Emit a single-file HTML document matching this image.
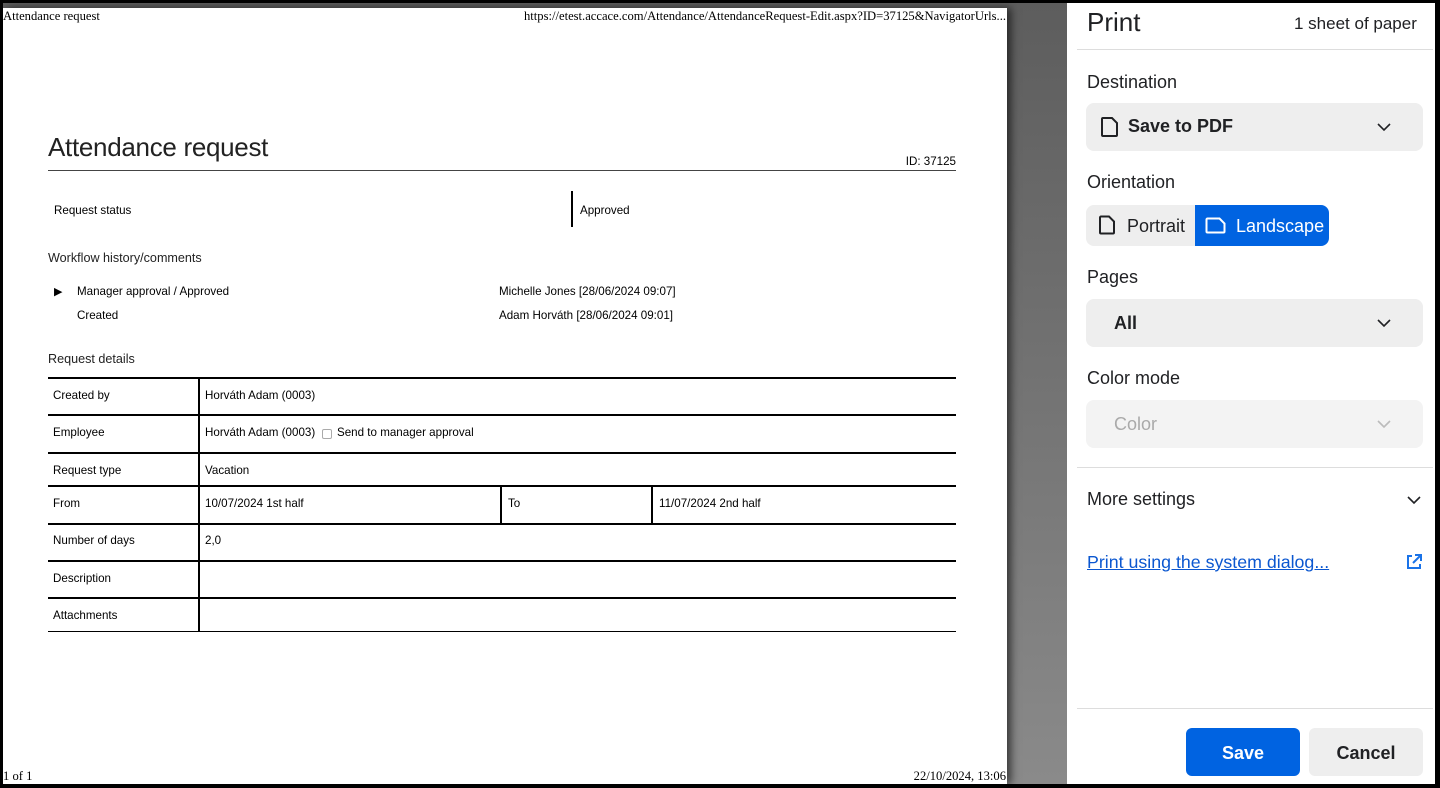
<!DOCTYPE html>
<html><head><meta charset="utf-8"><style>
*{margin:0;padding:0;box-sizing:border-box}
body{width:1440px;height:788px;background:#000;position:relative;overflow:hidden;font-family:"Segoe UI","Liberation Sans",sans-serif}
.a{position:absolute}
#gray{left:3px;top:3px;width:1064px;height:781px;background:linear-gradient(#5d5d5d,#8a8a8a)}
#page{left:3px;top:8px;width:1004px;height:776px;background:#fff;box-shadow:4px 0 8px rgba(0,0,0,.6)}
.ser{font-family:"Liberation Serif",serif;font-size:12.6px;color:#000}
.s{font-size:11.6px;color:#000;white-space:nowrap}
.hl{background:#000;height:2px}
.vl{background:#000;width:2px}
#panel{left:1067px;top:3px;width:368px;height:781px;background:#fff}
.lab{font-size:18px;color:#202124;left:20px}
.sel{left:19px;width:337px;height:48px;background:#eee;border-radius:8px}
.chev{position:absolute;right:32px;top:20px}
</style></head><body>
<div class="a" id="gray"></div>
<div class="a" id="page">
 <div class="a ser" style="left:0;top:1px">Attendance request</div>
 <div class="a ser" style="right:1px;top:1px">https://etest.accace.com/Attendance/AttendanceRequest-Edit.aspx?ID=37125&amp;NavigatorUrls...</div>
 <div class="a" style="left:45px;top:124px;font-size:26px;font-weight:300;color:#222;letter-spacing:-0.3px">Attendance request</div>
 <div class="a s" style="right:51px;top:147px">ID: 37125</div>
 <div class="a" style="left:45px;top:162px;width:908px;height:1px;background:#444"></div>
 <div class="a s" style="left:51px;top:196px">Request status</div>
 <div class="a vl" style="left:568px;top:183px;height:36px"></div>
 <div class="a s" style="left:577px;top:196px">Approved</div>
 <div class="a" style="left:45px;top:243px;font-size:12.6px;color:#222">Workflow history/comments</div>
 <div class="a" style="left:51px;top:277px;font-size:11px">&#9654;</div>
 <div class="a s" style="left:74px;top:277px">Manager approval / Approved</div>
 <div class="a s" style="left:496px;top:277px">Michelle Jones [28/06/2024 09:07]</div>
 <div class="a s" style="left:74px;top:301px">Created</div>
 <div class="a s" style="left:496px;top:301px">Adam Horváth [28/06/2024 09:01]</div>
 <div class="a" style="left:45px;top:344px;font-size:12.6px;color:#222">Request details</div>
 <div class="a hl" style="left:45px;top:369px;width:908px"></div>
 <div class="a hl" style="left:45px;top:406px;width:908px"></div>
 <div class="a hl" style="left:45px;top:444px;width:908px"></div>
 <div class="a hl" style="left:45px;top:477px;width:908px"></div>
 <div class="a hl" style="left:45px;top:515px;width:908px"></div>
 <div class="a hl" style="left:45px;top:552px;width:908px"></div>
 <div class="a hl" style="left:45px;top:589px;width:908px"></div>
 <div class="a" style="left:45px;top:623px;width:908px;height:1px;background:#000"></div>
 <div class="a vl" style="left:195px;top:370px;height:254px"></div>
 <div class="a vl" style="left:497px;top:478px;height:38px"></div>
 <div class="a vl" style="left:648px;top:478px;height:38px"></div>
 <div class="a s" style="left:50px;top:381px">Created by</div>
 <div class="a s" style="left:202px;top:381px">Horváth Adam (0003)</div>
 <div class="a s" style="left:50px;top:418px">Employee</div>
 <div class="a s" style="left:202px;top:418px">Horváth Adam (0003)</div>
 <div class="a" style="left:319px;top:421px;width:10px;height:10px;border:1px solid #aaa;border-radius:2px"></div>
 <div class="a s" style="left:334px;top:418px">Send to manager approval</div>
 <div class="a s" style="left:50px;top:456px">Request type</div>
 <div class="a s" style="left:202px;top:456px">Vacation</div>
 <div class="a s" style="left:50px;top:489px">From</div>
 <div class="a s" style="left:202px;top:489px">10/07/2024 1st half</div>
 <div class="a s" style="left:505px;top:489px">To</div>
 <div class="a s" style="left:656px;top:489px">11/07/2024 2nd half</div>
 <div class="a s" style="left:50px;top:526px">Number of days</div>
 <div class="a s" style="left:202px;top:526px">2,0</div>
 <div class="a s" style="left:50px;top:564px">Description</div>
 <div class="a s" style="left:50px;top:601px">Attachments</div>
 <div class="a ser" style="left:0;top:761px">1 of 1</div>
 <div class="a ser" style="right:1px;top:761px">22/10/2024, 13:06</div>
</div>
<div class="a" id="panel">
 <div class="a" style="left:20px;top:4px;font-size:26px;font-weight:500;color:#202124">Print</div>
 <div class="a" style="left:227px;top:11px;font-size:17px;color:#202124">1 sheet of paper</div>
 <div class="a" style="left:10px;top:46px;width:356px;height:1px;background:#ddd"></div>
 <div class="a lab" style="top:69px">Destination</div>
 <div class="a sel" style="top:100px">
  <svg class="a" style="left:14px;top:13px" width="20" height="22" viewBox="0 0 20 22"><path d="M3 2h9l5 5v12a1 1 0 0 1-1 1H3a1 1 0 0 1-1-1V3a1 1 0 0 1 1-1z" fill="none" stroke="#202124" stroke-width="2"/></svg>
  <div class="a" style="left:42px;top:13px;font-size:18px;font-weight:600;color:#202124">Save to PDF</div>
  <svg class="chev" width="14" height="9"><path d="M1 1l6 6 6-6" fill="none" stroke="#202124" stroke-width="1.6"/></svg>
 </div>
 <div class="a lab" style="top:169px">Orientation</div>
 <div class="a" style="left:19px;top:202px;width:109px;height:41px;background:#eee;border-radius:8px 0 0 8px"></div>
 <svg class="a" style="left:31px;top:212px" width="18" height="21"><path d="M3 1.5h8l5 5v11a1 1 0 0 1-1 1H3a1 1 0 0 1-1-1V2.5a1 1 0 0 1 1-1z" fill="none" stroke="#202124" stroke-width="2"/></svg>
 <div class="a" style="left:60px;top:213px;font-size:18px;color:#202124">Portrait</div>
 <div class="a" style="left:128px;top:202px;width:134px;height:41px;background:#0063e1;border-radius:0 8px 8px 0"></div>
 <svg class="a" style="left:138px;top:214px" width="22" height="17"><path d="M2.5 1.5h12l5 5v8a1 1 0 0 1-1 1h-16a1 1 0 0 1-1-1v-12a1 1 0 0 1 1-1z" fill="none" stroke="#fff" stroke-width="2"/></svg>
 <div class="a" style="left:169px;top:213px;font-size:18px;color:#fff">Landscape</div>
 <div class="a lab" style="top:264px">Pages</div>
 <div class="a sel" style="top:296px">
  <div class="a" style="left:28px;top:14px;font-size:18px;font-weight:600;color:#202124">All</div>
  <svg class="chev" width="14" height="9"><path d="M1 1l6 6 6-6" fill="none" stroke="#202124" stroke-width="1.6"/></svg>
 </div>
 <div class="a lab" style="top:365px">Color mode</div>
 <div class="a sel" style="top:397px;background:#f3f3f3">
  <div class="a" style="left:28px;top:14px;font-size:18px;color:#aaa">Color</div>
  <svg class="chev" width="14" height="9"><path d="M1 1l6 6 6-6" fill="none" stroke="#bbb" stroke-width="1.6"/></svg>
 </div>
 <div class="a" style="left:10px;top:464px;width:356px;height:1px;background:#ddd"></div>
 <div class="a lab" style="top:486px">More settings</div>
 <svg class="a" style="left:340px;top:493px" width="14" height="9"><path d="M1 1l6 6 6-6" fill="none" stroke="#202124" stroke-width="1.6"/></svg>
 <div class="a" style="left:20px;top:549px;font-size:17.8px;color:#0b57d0;text-decoration:underline">Print using the system dialog...</div>
 <svg class="a" style="left:338px;top:550px" width="18" height="18"><path d="M7 3H3v12h12v-4M10 2h6v6M16 2L8 10" fill="none" stroke="#1a73e8" stroke-width="2"/></svg>
 <div class="a" style="left:10px;top:705px;width:356px;height:1px;background:#ddd"></div>
 <div class="a" style="left:119px;top:725px;width:114px;height:48px;background:#0063e1;border-radius:6px;color:#fff;font-size:18px;font-weight:600;text-align:center;line-height:50px">Save</div>
 <div class="a" style="left:242px;top:725px;width:114px;height:48px;background:#eee;border-radius:6px;color:#202124;font-size:18px;font-weight:600;text-align:center;line-height:50px">Cancel</div>
</div>
</body></html>
